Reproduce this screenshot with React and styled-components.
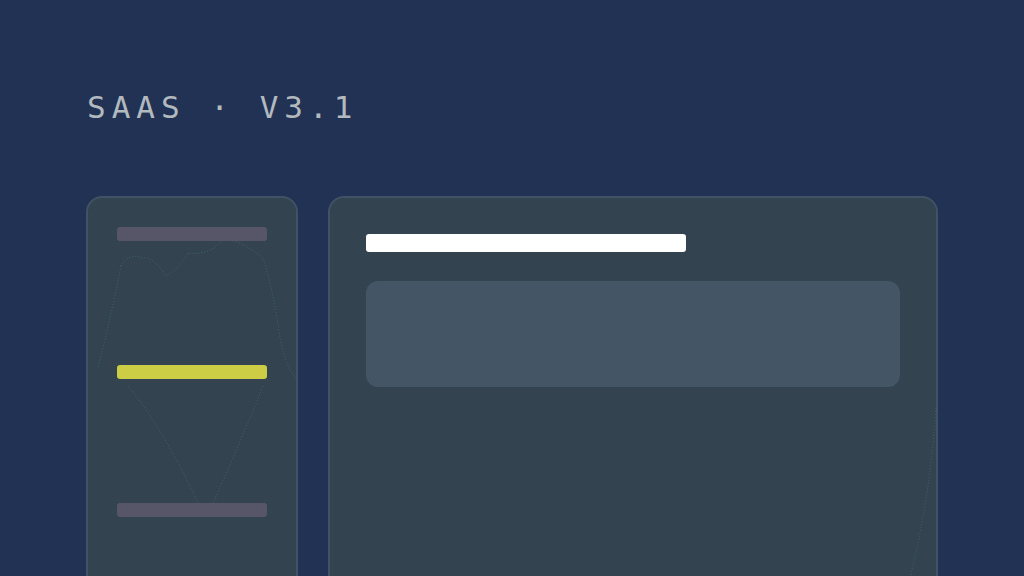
import React from "react";
import styled, { createGlobalStyle } from "styled-components";

const Global = createGlobalStyle`
  html, body { margin: 0; padding: 0; background: #223254; overflow: hidden; }
  body { width: 1024px; height: 576px; }
`;

const Page = styled.div`
  width: 1024px;
  height: 576px;
  box-sizing: border-box;
  padding: 88px 0 0 86px;
  background: #223254;
  overflow: hidden;
`;

const Title = styled.h1`
  margin: 0 0 0 1px;
  font-family: "DejaVu Sans Mono", "Liberation Mono", monospace;
  font-weight: 400;
  font-size: 31px;
  line-height: 38px;
  letter-spacing: 6px;
  color: #b2babf;
`;

const Row = styled.div`
  display: flex;
  gap: 30px;
  margin-top: 70px;
  align-items: flex-start;
`;

const Card = styled.div`
  position: relative;
  box-sizing: border-box;
  width: ${(p) => p.$w}px;
  height: 420px;
  background: #33434f;
  border: 2px solid #3f5365;
  border-radius: 16px;
  padding: ${(p) => p.$pad}px;
`;

const SideList = styled.div`
  position: relative;
  display: flex;
  flex-direction: column;
  gap: 124px;
`;

const SideBar = styled.div`
  height: 14px;
  width: 150px;
  border-radius: 3px;
  background: ${(p) => (p.$active ? "#cdcd45" : "#575668")};
`;

const Headline = styled.div`
  width: 320px;
  height: 18px;
  border-radius: 3px;
  background: #ffffff;
`;

const Block = styled.div`
  margin-top: 29px;
  height: 106px;
  border-radius: 12px;
  background: #445566;
`;

const Wire = styled.svg`
  position: absolute;
  left: 0;
  top: 0;
  pointer-events: none;
`;

export default function App() {
  return (
    <Page>
      <Global />
      <Title>SAAS · V3.1</Title>
      <Row>
        <Card $w={212} $pad={29}>
          <Wire width="212" height="420" viewBox="0 0 212 420">
            <g fill="none" stroke="#3f7a80" strokeWidth="1" strokeDasharray="1 2" opacity="0.7">
              <path d="M33 68 Q40 55 55 60 Q65 58 78 78 Q90 72 100 55 Q120 58 135 42 Q150 40 175 60 Q185 90 192 140 Q198 170 208 180" />
              <path d="M33 68 Q25 110 10 170" />
              <path d="M40 188 Q75 230 110 305 M175 188 Q150 250 125 305" />
            </g>
          </Wire>
          <SideList>
            <SideBar />
            <SideBar $active />
            <SideBar />
          </SideList>
        </Card>
        <Card $w={610} $pad={36}>
          <Wire width="610" height="420" viewBox="0 0 610 420">
            <g fill="none" stroke="#3f7a80" strokeWidth="1" strokeDasharray="1 2" opacity="0.6">
              <path d="M606 210 Q600 300 580 380" />
            </g>
          </Wire>
          <Headline />
          <Block />
        </Card>
      </Row>
    </Page>
  );
}
